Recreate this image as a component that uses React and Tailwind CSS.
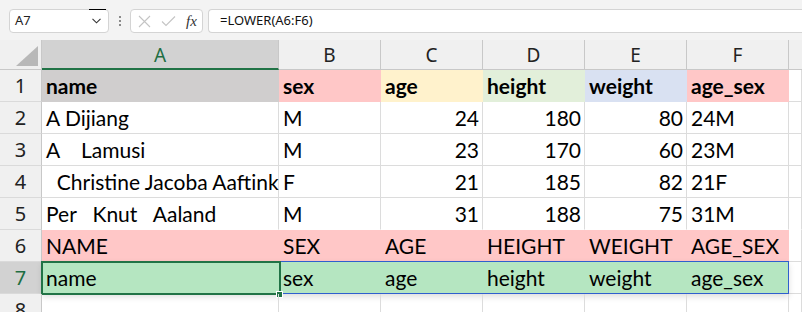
import React from "react";

const CELL_FONT = { fontFamily: "Lato, 'Liberation Sans', sans-serif" };
const UI_FONT = { fontFamily: "'Noto Sans', 'Open Sans', sans-serif" };

const PINK = "bg-[#ffc7c7]";
const GREEN7 = "bg-[#b5e6c1]";

const widths = ["w-[237px]", "w-[102px]", "w-[102px]", "w-[102px]", "w-[102px]", "w-[102px]", "w-[13px]"];

const rows = [
  {
    n: 1,
    cells: [
      { t: "name", bg: "bg-[#d0cece]", b: true },
      { t: "sex", bg: PINK, b: true },
      { t: "age", bg: "bg-[#fff2cc]", b: true },
      { t: "height", bg: "bg-[#e2efda]", b: true },
      { t: "weight", bg: "bg-[#d9e1f2]", b: true },
      { t: "age_sex", bg: PINK, b: true },
    ],
  },
  { n: 2, cells: [{ t: "A Dijiang" }, { t: "M" }, { t: "24", r: true }, { t: "180", r: true }, { t: "80", r: true }, { t: "24M" }] },
  { n: 3, cells: [{ t: "A    Lamusi" }, { t: "M" }, { t: "23", r: true }, { t: "170", r: true }, { t: "60", r: true }, { t: "23M" }] },
  { n: 4, cells: [{ t: "  Christine Jacoba Aaftink" }, { t: "F" }, { t: "21", r: true }, { t: "185", r: true }, { t: "82", r: true }, { t: "21F" }] },
  { n: 5, cells: [{ t: "Per   Knut   Aaland" }, { t: "M" }, { t: "31", r: true }, { t: "188", r: true }, { t: "75", r: true }, { t: "31M" }], noBottom: true },
  {
    n: 6,
    cells: ["NAME", "SEX", "AGE", "HEIGHT", "WEIGHT", "AGE_SEX"].map((t) => ({ t, bg: PINK })),
  },
  {
    n: 7,
    sel: true,
    cells: ["name", "sex", "age", "height", "weight", "age_sex"].map((t) => ({ t, bg: GREEN7 })),
  },
  { n: 8, cells: [{ t: "" }, { t: "" }, { t: "" }, { t: "" }, { t: "" }, { t: "" }] },
];

function Cell({ c, w, noBottom }) {
  const filled = !!c.bg;
  return (
    <div
      className={`${w} h-full shrink-0 flex items-end pb-[3px] px-[4px] overflow-visible whitespace-pre text-[21px] leading-[24px] text-[#000] border-r border-b ${
        filled ? `${c.bg} border-transparent` : noBottom ? "border-r-[#dcdcdc] border-b-transparent" : "border-[#dcdcdc]"
      } ${c.r ? "justify-end pr-[3px]" : ""} ${c.b ? "font-bold" : ""}`}
      style={CELL_FONT}
    >
      {c.t}
    </div>
  );
}

export default function App() {
  const colLetters = ["A", "B", "C", "D", "E", "F", ""];
  return (
    <div className="w-[802px] h-[312px] overflow-hidden bg-white relative">
      {/* Formula bar */}
      <div className="h-[40px] bg-[#f3f3f3] flex items-start pt-[9px] pl-[9px]" style={UI_FONT}>
        <div className="relative w-[100px] h-[24px] bg-white border border-[#d4d4d4] rounded-[4px] flex items-center pl-[5px] text-[13px] text-[#222]">
          A7
          <div className="absolute right-[2px] top-[-1px] w-[17px] h-[1px] bg-black" />
          <svg className="absolute right-[7px] top-[8px]" width="9" height="6" viewBox="0 0 9 6">
            <path d="M0.5 0.8 L4.5 4.8 L8.5 0.8" fill="none" stroke="#333" strokeWidth="1.1" />
          </svg>
        </div>
        <div className="w-[21px] h-[24px] flex flex-col items-center justify-center gap-[2px]">
          <div className="w-[2px] h-[2px] bg-[#8a8a8a]" />
          <div className="w-[2px] h-[2px] bg-[#8a8a8a]" />
          <div className="w-[2px] h-[2px] bg-[#8a8a8a]" />
        </div>
        <div className="w-[73px] h-[24px] bg-white border border-[#d4d4d4] rounded-[4px] flex items-center pl-[7px] gap-[10px]">
          <svg width="13" height="13" viewBox="0 0 13 13">
            <path d="M1 1 L12 12 M12 1 L1 12" stroke="#c4c4c4" strokeWidth="1.1" fill="none" />
          </svg>
          <svg width="15" height="12" viewBox="0 0 15 12">
            <path d="M1 6.5 L5 10.5 L14 1.5" stroke="#c4c4c4" strokeWidth="1.1" fill="none" />
          </svg>
          <span className="text-[15px] italic text-[#333] leading-none" style={{ fontFamily: "'Liberation Serif', serif" }}>
            fx
          </span>
        </div>
        <div className="ml-[5px] flex-1 h-[24px] bg-white border border-[#d4d4d4] border-r-0 rounded-l-[4px] flex items-center pl-[11px] text-[13px] text-[#111]">
          =LOWER(A6:F6)
        </div>
      </div>

      {/* Column headers */}
      <div className="h-[30px] flex bg-[#f0f0f0]" style={UI_FONT}>
        <div className="w-[42px] h-full shrink-0 border-r border-b border-[#c8c8c8] relative flex items-end justify-end pr-[3px] pb-[3px]">
          <svg width="22" height="20" viewBox="0 0 22 20">
            <path d="M22 0 L22 20 L0 20 Z" fill="#b8b8b8" />
          </svg>
        </div>
        {colLetters.map((l, i) => {
          const sel = i === 0;
          return (
            <div
              key={i}
              className={`${widths[i]} h-full shrink-0 flex items-center justify-center pt-[2px] text-[19px] ${
                sel ? "bg-[#d2d2d2] text-[#1e6e42] border-b-2 border-b-[#217346]" : "text-[#222] border-b border-b-[#c8c8c8]"
              } ${i < 6 ? "border-r border-r-[#c8c8c8]" : ""}`}
            >
              {l}
            </div>
          );
        })}
      </div>

      {/* Rows */}
      {rows.map((row) => (
        <div key={row.n} className="h-[32px] flex relative">
          <div
            className={`w-[42px] h-full shrink-0 flex items-center justify-center pt-[1px] text-[20px] border-r border-b border-[#c8c8c8] border-b-[#dadada] ${
              row.sel ? "bg-[#d2d2d2] text-[#1e6e42]" : "bg-[#f0f0f0] text-[#222]"
            }`}
            style={UI_FONT}
          >
            {row.n}
          </div>
          {row.cells.map((c, i) => (
            <Cell key={i} c={c} w={widths[i]} noBottom={row.noBottom} />
          ))}
          <Cell c={{ t: "" }} w={widths[6]} noBottom={row.noBottom} />
          {row.sel && (
            <>
              <div className="absolute left-[42px] top-[-1px] w-[747px] h-[33px] border border-[#2f5fce] shadow-[0_3px_6px_rgba(0,0,0,0.13)] pointer-events-none" />
              <div className="absolute left-[41px] top-[-1px] w-[240px] h-[34px] border-[2.5px] border-[#217346] pointer-events-none" />
              <div className="absolute left-[276px] top-[29px] w-[7px] h-[7px] bg-[#217346] border border-white pointer-events-none" />
            </>
          )}
        </div>
      ))}
    </div>
  );
}
